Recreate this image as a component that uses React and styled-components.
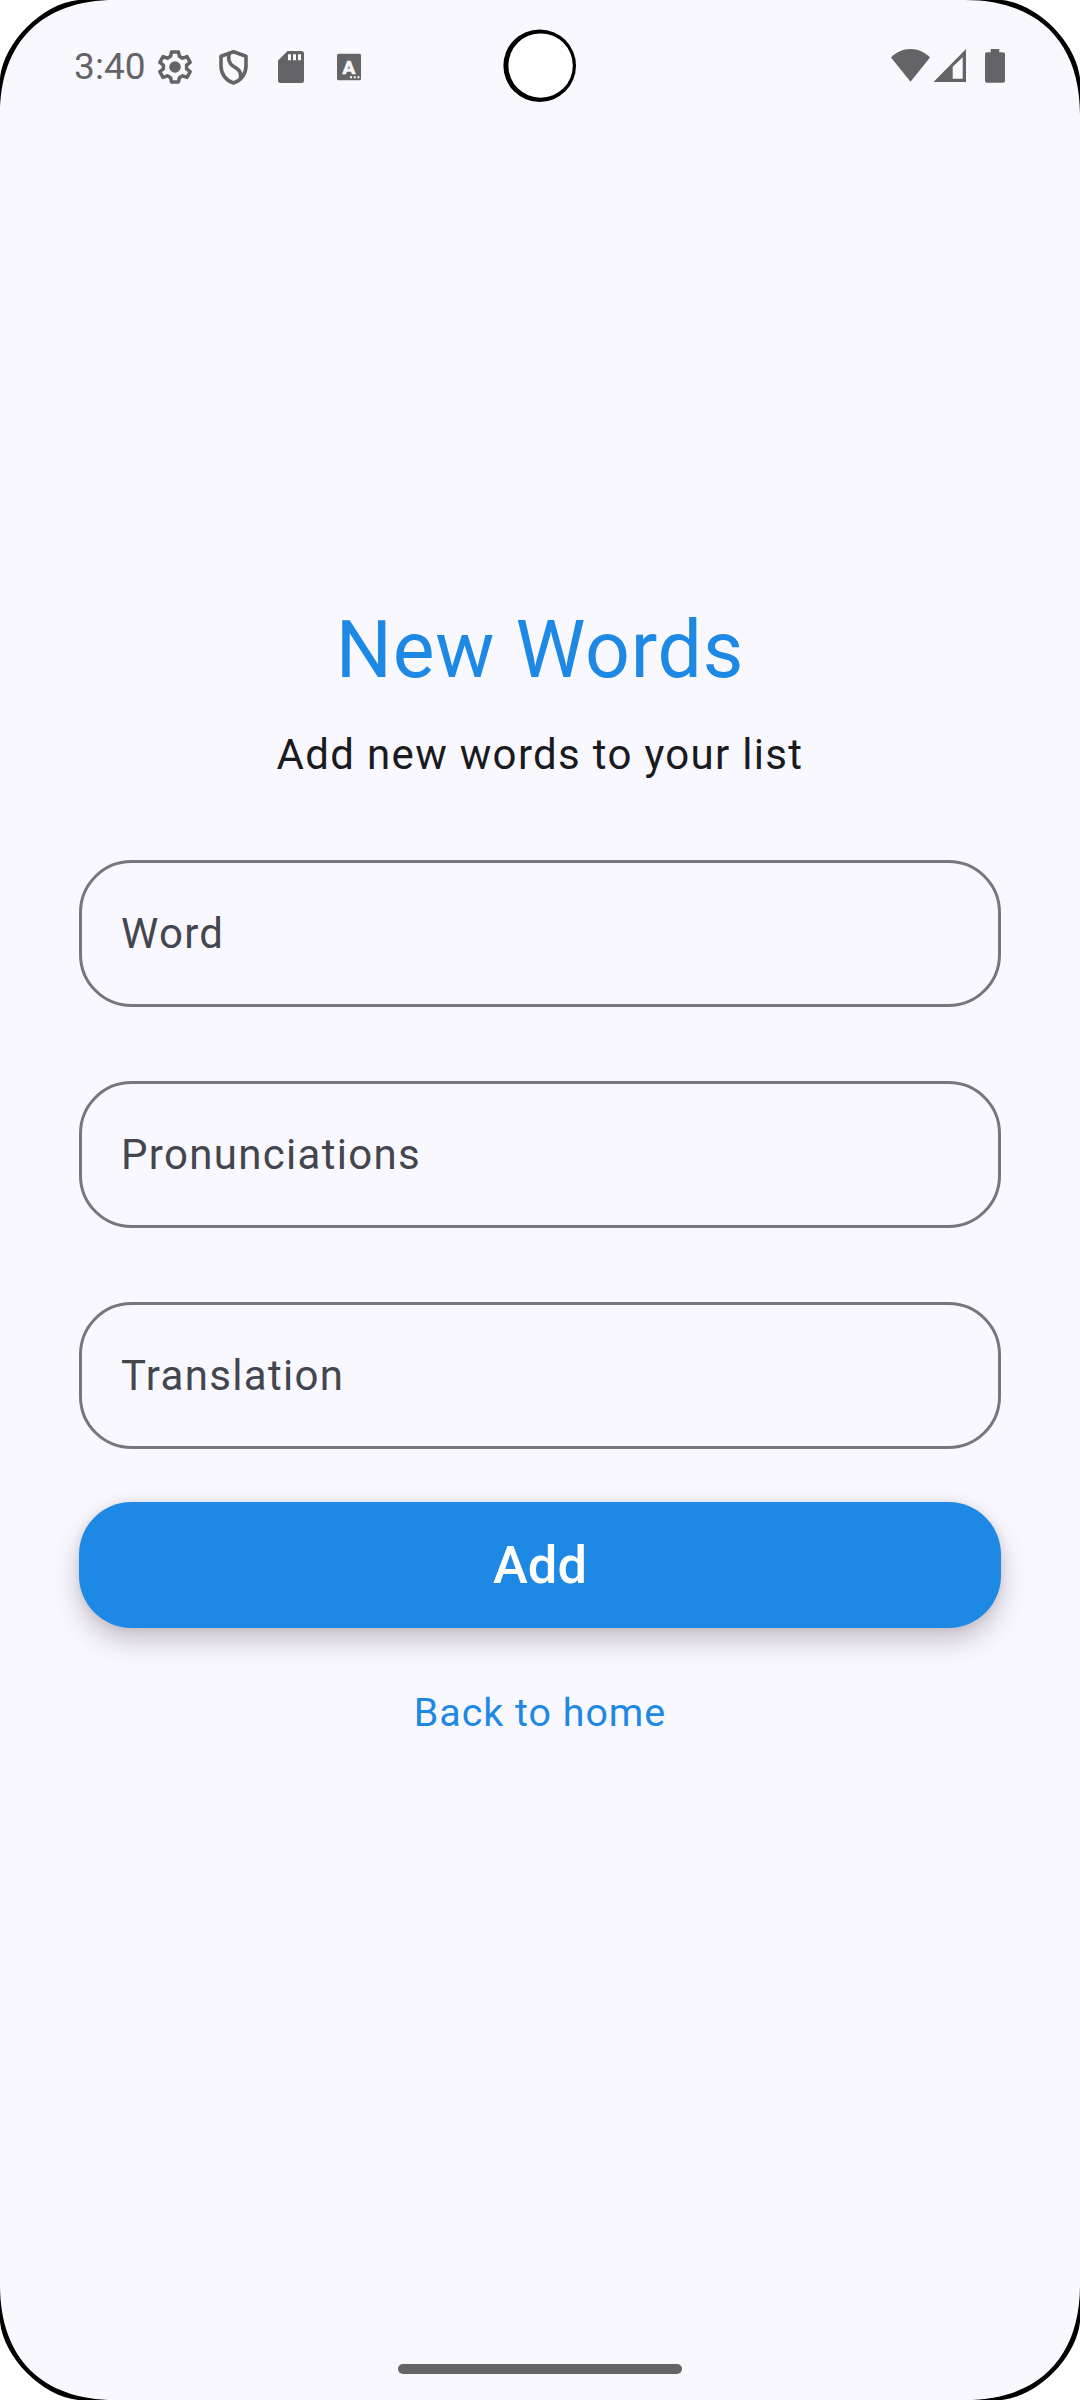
import React from "react";
import styled, { createGlobalStyle } from "styled-components";

const INK = "#646466";
const BG = "#f9f8ff";
const BLUE = "#1e88e5";

const GlobalStyle = createGlobalStyle`
  *, *::before, *::after { box-sizing: border-box; }
  body { margin: 0; background: ${BG}; }
`;

const Screen = styled.div`
  position: relative;
  display: flex;
  flex-direction: column;
  width: 1080px;
  height: 2400px;
  overflow: hidden;
  background: ${BG};
  font-family: Roboto, "Noto Sans", sans-serif;
`;

const StatusBar = styled.header`
  display: flex;
  align-items: center;
  height: 134px;
  padding: 0 71px 0 74px;
  color: ${INK};
`;

const Clock = styled.time`
  width: 81px;
  padding-bottom: 2px;
  font-size: 37px;
  line-height: 43px;
  letter-spacing: 0.1px;
  white-space: nowrap;
`;

const Notifications = styled.div`
  display: flex;
  gap: 18px;
`;

const SystemIcons = styled.div`
  display: flex;
  margin-left: auto;
`;

const Glyph = styled.svg`
  display: block;
  width: ${(p) => p.$width || 40}px;
  height: 40px;
  fill: ${INK};
`;

const Form = styled.main`
  flex: 1;
  display: flex;
  flex-direction: column;
  align-items: center;
  padding: 461px 79px 0;
`;

const Title = styled.h1`
  margin: 0;
  font-size: 78.75px;
  font-weight: 400;
  line-height: 110px;
  letter-spacing: 0.8px;
  color: ${BLUE};
`;

const Subtitle = styled.p`
  margin: 18px 0 0;
  font-size: 42px;
  line-height: 63px;
  letter-spacing: 1.3125px;
  color: #1a1b20;
`;

const Fields = styled.div`
  display: flex;
  flex-direction: column;
  gap: 74px;
  width: 100%;
  margin-top: 74px;
`;

const Field = styled.input`
  width: 100%;
  height: 147px;
  padding: 0 39px;
  border: 3px solid #757780;
  border-radius: 52.5px;
  outline: none;
  background: transparent;
  font-family: inherit;
  font-size: 42px;
  letter-spacing: 1.3125px;
  color: #44464f;

  &::placeholder {
    color: #44464f;
    opacity: 1;
  }
`;

const AddButton = styled.button`
  width: 100%;
  height: 126px;
  margin-top: 53px;
  padding: 0 0 1px;
  border: none;
  border-radius: 52.5px;
  background: ${BLUE};
  box-shadow: 0 13px 26px rgba(60, 40, 50, 0.26), 0 0 8px rgba(60, 40, 50, 0.1);
  font-family: inherit;
  font-size: 52.5px;
  font-weight: 500;
  line-height: 62px;
  letter-spacing: 0;
  color: #fff;
`;

const BackLink = styled.a`
  margin-top: 55px;
  font-size: 39.375px;
  line-height: 60px;
  letter-spacing: 1px;
  color: ${BLUE};
`;

const NavigationBar = styled.footer`
  display: flex;
  justify-content: center;
  height: 36px;
`;

const HomeHandle = styled.div`
  width: 284px;
  height: 10px;
  border-radius: 5px;
  background: ${INK};
`;

const Camera = styled.svg`
  position: absolute;
  top: 27px;
  left: 500px;
  width: 80px;
  height: 80px;
`;

const Corner = styled.svg`
  position: absolute;
  width: 120px;
  height: 120px;
  ${(p) => (p.$bottom ? "bottom: 0;" : "top: 0;")}
  ${(p) => (p.$right ? "right: 0;" : "left: 0;")}
  transform: scale(${(p) => (p.$right ? -1 : 1)}, ${(p) => (p.$bottom ? -1 : 1)});
`;

function ScreenCorner({ right, bottom }) {
  return (
    <Corner $right={right} $bottom={bottom} viewBox="0 0 120 120" aria-hidden="true">
      <path d="M0 0V115C0 42 42 0 115 0Z" fill="#000" />
      <path d="M0 0V78C4 42 42 4 78 0Z" fill="#fff" />
    </Corner>
  );
}

const GearIcon = () => (
  <Glyph viewBox="155 47 40 40">
    <path
      d="M171.5 52H178.5L179.4 56.3L182.6 58.2L187 56.6L190.2 62.4L186.6 65.2V68.8L190.2 71.6L187 77.4L182.6 75.8L179.4 77.7L178.5 82H171.5L170.6 77.7L167.4 75.8L163 77.4L159.8 71.6L163.4 68.8V65.2L159.8 62.4L163 56.6L167.4 58.2L170.6 56.3Z"
      fill="none"
      stroke={INK}
      strokeWidth="3.5"
      strokeLinejoin="round"
    />
    <circle cx="175" cy="67" r="5.8" />
  </Glyph>
);

const ShieldIcon = () => (
  <Glyph viewBox="213 47 40 40">
    <g fill="none" stroke={INK} strokeWidth="3.6" strokeLinejoin="round">
      <path d="M233.5 51.8L246 56.3V66C246 74 241 80.5 233.5 83C226 80.5 221 74 221 66V56.3Z" />
      <path d="M229.3 53.5C227.8 59 228.5 63 233 66C238.5 69.3 241.5 71.5 240.5 78" />
    </g>
  </Glyph>
);

const SdCardIcon = () => (
  <Glyph viewBox="271 47 40 40">
    <path
      fillRule="evenodd"
      d="M287.5 51H301.5Q304 51 304 53.5V80.5Q304 83 301.5 83H280.5Q278 83 278 80.5V60.5ZM288 54.3V60.3H291V54.3ZM293 54.3V60.3H296V54.3ZM298 54.3V60.3H301V54.3Z"
    />
  </Glyph>
);

const KeyboardIcon = () => (
  <Glyph viewBox="329 47 40 40">
    <rect x="337" y="53.7" width="24" height="26.6" rx="1.6" />
    <text
      x="349"
      y="73.8"
      textAnchor="middle"
      fontSize="19"
      fontWeight="700"
      fill={BG}
      stroke={BG}
      strokeWidth="0.7"
    >
      A
    </text>
    <path d="M350 76.3h2v2h-2zM353.7 76.3h2v2h-2zM357.4 76.3h2v2h-2z" fill={BG} />
  </Glyph>
);

const WifiIcon = () => (
  <Glyph $width={42} viewBox="890 47 42 40">
    <path d="M910.5 81.8L891 57.6C896 52 903 49 910.5 49S925 52 930 57.6Z" />
  </Glyph>
);

const SignalIcon = () => (
  <Glyph $width={50} viewBox="932 47 50 40">
    <path fillRule="evenodd" d="M933.5 82H966V49ZM952.7 66.7L962.7 57.3V78.7H952.7Z" />
  </Glyph>
);

const BatteryIcon = () => (
  <Glyph $width={27} viewBox="982 47 27 40">
    <path d="M990.7 49H999.3V52.3H1003Q1005 52.3 1005 54.3V80.7Q1005 82.7 1003 82.7H987Q985 82.7 985 80.7V54.3Q985 52.3 987 52.3H990.7Z" />
  </Glyph>
);

export default function App() {
  return (
    <Screen>
      <GlobalStyle />
      <StatusBar>
        <Clock>3:40</Clock>
        <Notifications>
          <GearIcon />
          <ShieldIcon />
          <SdCardIcon />
          <KeyboardIcon />
        </Notifications>
        <SystemIcons>
          <WifiIcon />
          <SignalIcon />
          <BatteryIcon />
        </SystemIcons>
      </StatusBar>
      <Form>
        <Title>New Words</Title>
        <Subtitle>Add new words to your list</Subtitle>
        <Fields>
          <Field placeholder="Word" />
          <Field placeholder="Pronunciations" />
          <Field placeholder="Translation" />
        </Fields>
        <AddButton>Add</AddButton>
        <BackLink>Back to home</BackLink>
      </Form>
      <NavigationBar>
        <HomeHandle />
      </NavigationBar>
      <Camera viewBox="500 27 80 80" aria-hidden="true">
        <circle cx="539.7" cy="65.7" r="36.3" fill="#000" />
        <circle cx="540.6" cy="65.6" r="32.2" fill="#fff" />
      </Camera>
      <ScreenCorner />
      <ScreenCorner right />
      <ScreenCorner bottom />
      <ScreenCorner right bottom />
    </Screen>
  );
}
